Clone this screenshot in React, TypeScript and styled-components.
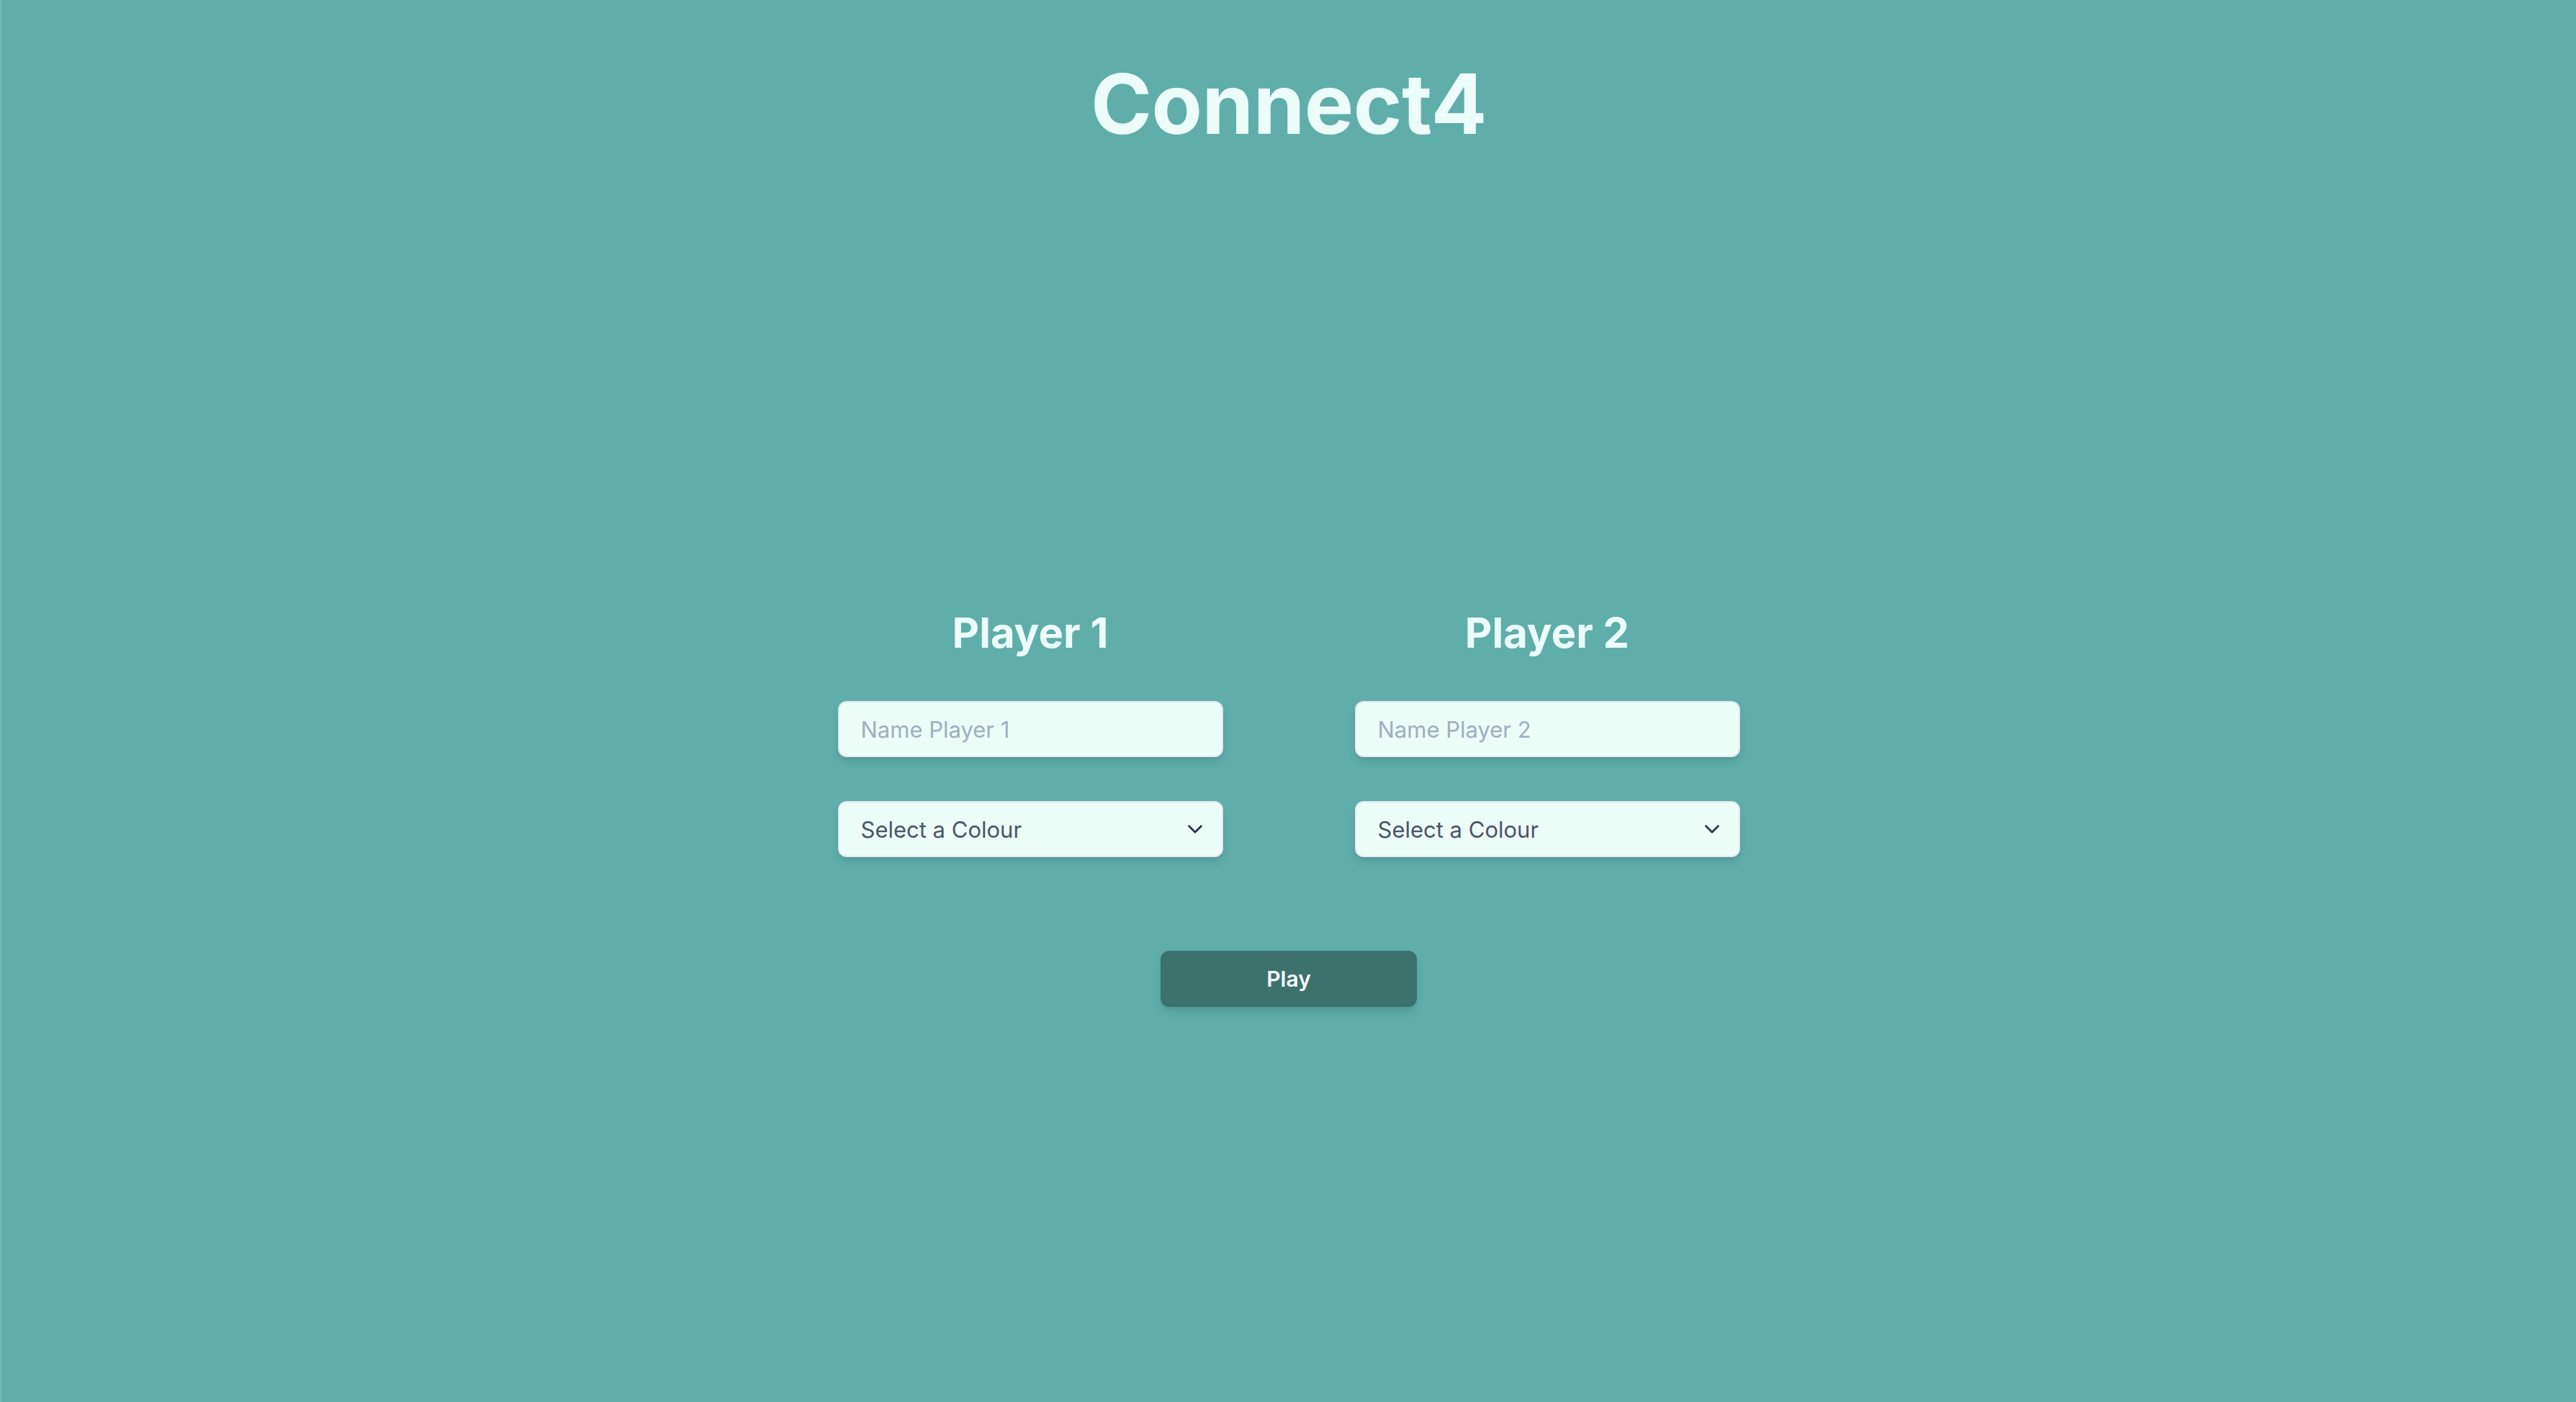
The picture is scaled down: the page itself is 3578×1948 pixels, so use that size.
import React from "react";
import styled, { createGlobalStyle } from "styled-components";

const GlobalStyle = createGlobalStyle`
  html, body {
    margin: 0;
    padding: 0;
    background: #5faeaa;
  }
  body {
    font-family: Inter, "Noto Sans", "Liberation Sans", sans-serif;
  }
  * { box-sizing: border-box; }
`;

const Page = styled.div`
  min-height: 100vh;
  background: #5faeaa;
  border-left: 2px solid #72bab6;
  display: flex;
  flex-direction: column;
  align-items: center;
`;

const Title = styled.h1`
  margin: 87px 0 0;
  font-size: 115px;
  line-height: 1;
  font-weight: 700;
  letter-spacing: -0.5px;
  color: #ecfdf9;
`;

const Form = styled.div`
  margin-top: 648px;
  display: flex;
  flex-direction: column;
  align-items: center;
`;

const Columns = styled.div`
  display: grid;
  grid-template-columns: 535px 535px;
  column-gap: 183px;
`;

const Column = styled.div`
  display: flex;
  flex-direction: column;
  align-items: stretch;
`;

const PlayerHeading = styled.h2`
  margin: 0 0 66px;
  text-align: center;
  font-size: 58px;
  line-height: 1;
  font-weight: 700;
  color: #ecfdf9;
`;

const fieldBase = `
  height: 78px;
  width: 100%;
  border: 2px solid #e2e8f0;
  border-radius: 12px;
  background: #ecfdf8;
  box-shadow: 0 8px 14px -3px rgba(0, 0, 0, 0.12), 0 3px 6px -2px rgba(0, 0, 0, 0.08);
  font-family: Inter, "Noto Sans", "Liberation Sans", sans-serif;
  font-size: 31px;
`;

const NameInput = styled.input`
  ${fieldBase}
  padding: 0 30px;
  color: #4a5568;
  outline: none;
  &::placeholder {
    color: #a0aec0;
  }
`;

const SelectBox = styled.div`
  ${fieldBase}
  margin-top: 61px;
  display: flex;
  align-items: center;
  justify-content: space-between;
  padding: 0 20px 0 30px;
  color: #4a5568;
`;

const SelectLabel = styled.span`
  line-height: 1;
`;

const Chevron = styled.svg`
  width: 34px;
  height: 34px;
  flex: none;
`;

const PlayButton = styled.button`
  margin-top: 130px;
  width: 356px;
  height: 78px;
  border: none;
  border-radius: 12px;
  background: #3c716c;
  color: #f4fffc;
  font-family: Inter, "Noto Sans", "Liberation Sans", sans-serif;
  font-size: 30px;
  font-weight: 600;
  box-shadow: 0 8px 14px -3px rgba(0, 0, 0, 0.12), 0 3px 6px -2px rgba(0, 0, 0, 0.08);
  cursor: pointer;
`;

const players = [1, 2];

export default function App() {
  return (
    <>
      <GlobalStyle />
      <Page>
        <Title>Connect4</Title>
        <Form>
          <Columns>
            {players.map((n) => (
              <Column key={n}>
                <PlayerHeading>Player {n}</PlayerHeading>
                <NameInput placeholder={`Name Player ${n}`} />
                <SelectBox>
                  <SelectLabel>Select a Colour</SelectLabel>
                  <Chevron viewBox="0 0 24 24" fill="none" stroke="#2d3748" strokeWidth="2" strokeLinecap="round" strokeLinejoin="round">
                    <path d="M6 9l6 6 6-6" />
                  </Chevron>
                </SelectBox>
              </Column>
            ))}
          </Columns>
          <PlayButton>Play</PlayButton>
        </Form>
      </Page>
    </>
  );
}
